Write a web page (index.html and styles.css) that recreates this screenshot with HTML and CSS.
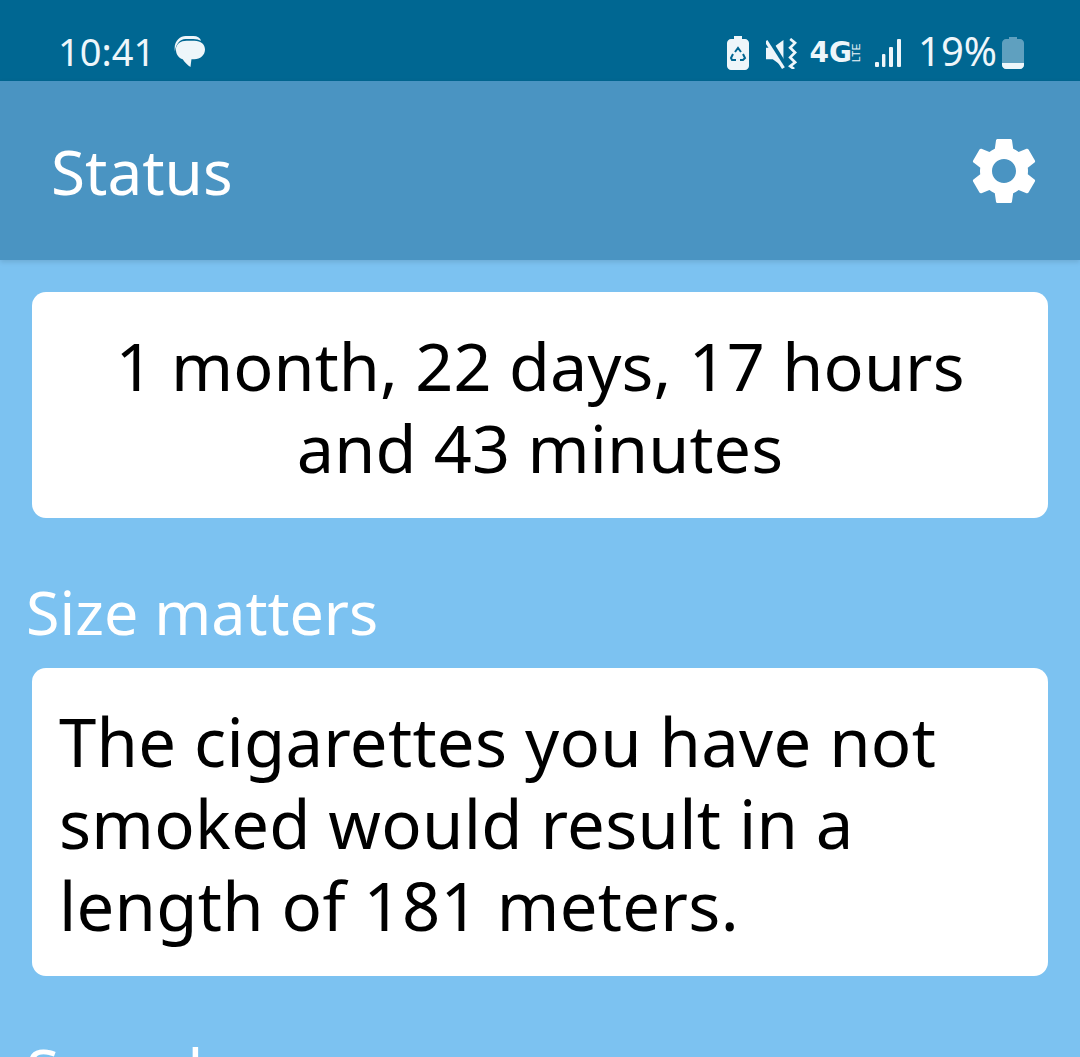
FILE: index.html
```html
<!DOCTYPE html>
<html lang="en">
<head>
    <meta charset="UTF-8">
    <meta name="viewport" content="width=device-width, initial-scale=1.0">
    <title>Status</title>
    <link rel="stylesheet" href="styles.css">
</head>
<body>
    <div class="status-bar">
        <div class="status-left">
            <span class="clock">10:41</span>
            <svg class="msg-icon" viewBox="0 0 32 32">
                <path d="M1 16C-1 6 6 0 12 0h8c4 0 7 2 8 5-2-1-5-2-8-2h-8C6 3 2 8 1 16z" fill="#eef6fa"/>
                <path d="M2 14c0-6 5-9 11-9h8c7 0 11 4 11 9 0 6-5 10-11 10h-3l-1 8c-3-2-6-5-8-8-4-1-7-5-7-10z" fill="#eef6fa"/>
            </svg>
        </div>
        <div class="status-right">
            <svg class="saver-icon" viewBox="0 0 22 34">
                <path d="M7 0h8v3h3c2 0 4 2 4 4v23c0 2-2 4-4 4H4c-2 0-4-2-4-4V7c0-2 2-4 4-4h3z" fill="#eef6fa"/>
                <path d="M8 16l3-4 3 4M16 18l2 4-2 2h-3M9 24H5l-1-2 2-4" fill="none" stroke="#006792" stroke-width="2"/>
            </svg>
            <svg class="mute-icon" viewBox="0 0 32 32">
                <path d="M0 10h7l11-8v28L7 22H0z" fill="#eef6fa"/>
                <path d="M2 1l18 29" stroke="#006792" stroke-width="6"/>
                <path d="M0 3l18 28" stroke="#eef6fa" stroke-width="3.4"/>
                <path d="M25 1l5 4-5 5 5 5-5 5 5 5-5 4 4 3" fill="none" stroke="#eef6fa" stroke-width="2.8"/>
            </svg>
            <span class="network"><span class="net-4g">4G</span><span class="net-lte">LTE</span></span>
            <svg class="signal-icon" viewBox="0 0 28 30">
                <rect x="1" y="24" width="4" height="5" rx="1" fill="#eef6fa"/>
                <rect x="8" y="16" width="3.4" height="13" rx="1" fill="#eef6fa"/>
                <rect x="15" y="9" width="4" height="20" rx="1" fill="#eef6fa"/>
                <rect x="23" y="1" width="4" height="28" rx="1" fill="#eef6fa"/>
            </svg>
            <span class="battery-text">19%</span>
            <svg class="battery-icon" viewBox="0 0 22 32">
                <path d="M7 0h8v2h3c2 0 4 2 4 4v22c0 2-2 4-4 4H4c-2 0-4-2-4-4V6c0-2 2-4 4-4h3z" fill="#5fa0bf"/>
                <path d="M0 26h22v2c0 2-2 4-4 4H4c-2 0-4-2-4-4z" fill="#eef6fa"/>
            </svg>
        </div>
    </div>
    <header class="app-bar">
        <h1>Status</h1>
        <svg class="gear" viewBox="0 0 24 24">
            <path d="M19.14 12.94c.04-.3.06-.61.06-.94 0-.32-.02-.64-.07-.94l2.03-1.58c.18-.14.23-.41.12-.61l-1.92-3.32c-.12-.22-.37-.29-.59-.22l-2.39.96c-.5-.38-1.03-.7-1.62-.94l-.36-2.54c-.04-.24-.24-.41-.48-.41h-3.84c-.24 0-.43.17-.47.41l-.36 2.54c-.59.24-1.13.57-1.62.94l-2.39-.96c-.22-.08-.47 0-.59.22L2.74 8.87c-.12.21-.08.47.12.61l2.03 1.58c-.05.3-.09.63-.09.94s.02.64.07.94l-2.03 1.58c-.18.14-.23.41-.12.61l1.92 3.32c.12.22.37.29.59.22l2.39-.96c.5.38 1.03.7 1.62.94l.36 2.54c.05.24.24.41.48.41h3.84c.24 0 .44-.17.47-.41l.36-2.54c.59-.24 1.13-.56 1.62-.94l2.39.96c.22.08.47 0 .59-.22l1.92-3.32c.12-.22.07-.47-.12-.61l-2.01-1.58zM12 15.6c-1.98 0-3.6-1.62-3.6-3.6s1.62-3.6 3.6-3.6 3.6 1.62 3.6 3.6-1.62 3.6-3.6 3.6z" fill="#fff"/>
        </svg>
    </header>
    <main class="content">
        <div class="card card-center">1 month, 22 days, 17 hours<br>and 43 minutes</div>
        <h2>Size matters</h2>
        <div class="card">The cigarettes you have not<br>smoked would result in a<br>length of 181 meters.</div>
        <h2>Speed</h2>
    </main>
</body>
</html>
```

FILE: styles.css
```css
body {
    margin: 0;
    height: 1057px;
    overflow: hidden;
    background-color: #7cc2f1;
    font-family: "Noto Sans", sans-serif;
}

.status-bar {
    height: 81px;
    box-sizing: border-box;
    padding: 26px 56px 0 58px;
    display: flex;
    justify-content: space-between;
    align-items: flex-start;
    background-color: #006792;
    color: #eef6fa;
}

.status-left, .status-right {
    display: flex;
    align-items: center;
    height: 50px;
}

.status-right {
    margin-top: 2px;
}

.clock {
    font-size: 38px;
    line-height: 50px;
}

.msg-icon {
    width: 31px;
    height: 31px;
    margin-left: 19px;
}

.saver-icon {
    width: 22px;
    height: 34px;
}

.mute-icon {
    width: 31px;
    height: 31px;
    margin-left: 17px;
}

.network {
    display: flex;
    align-items: center;
    margin-left: 13px;
}

.net-4g {
    font-family: "DejaVu Sans", sans-serif;
    font-weight: bold;
    font-size: 28px;
    line-height: 24px;
}

.net-lte {
    font-family: "Liberation Sans", sans-serif;
    font-size: 10px;
    line-height: 9px;
    letter-spacing: 0.5px;
    writing-mode: vertical-rl;
    transform: rotate(180deg);
}

.signal-icon {
    width: 28px;
    height: 30px;
    margin-left: 13px;
}

.battery-text {
    font-size: 40px;
    line-height: 50px;
    margin-left: 16px;
    margin-bottom: 4px;
}

.battery-icon {
    width: 22px;
    height: 32px;
    margin-left: 5px;
}

.app-bar {
    height: 179px;
    box-sizing: border-box;
    padding: 0 36px 0 51px;
    display: flex;
    justify-content: space-between;
    align-items: center;
    background-color: #4a94c2;
    box-shadow: 0 2px 5px rgba(0, 0, 0, 0.12);
}

h1 {
    margin: 0;
    font-size: 62px;
    font-weight: normal;
    color: #fff;
}

.gear {
    width: 80px;
    height: 80px;
}

.content {
    padding: 32px 32px 0;
}

.card {
    padding: 32px 27px 30px;
    background-color: #fff;
    border-radius: 14px;
    color: #000;
    font-size: 67px;
    line-height: 82px;
    letter-spacing: 0.27px;
}

.card-center {
    text-align: center;
    font-size: 66.5px;
    letter-spacing: 0.1px;
}

h2 {
    margin: 54px 0 16px -6px;
    font-size: 61px;
    line-height: 80px;
    font-weight: normal;
    color: #fff;
}
```
